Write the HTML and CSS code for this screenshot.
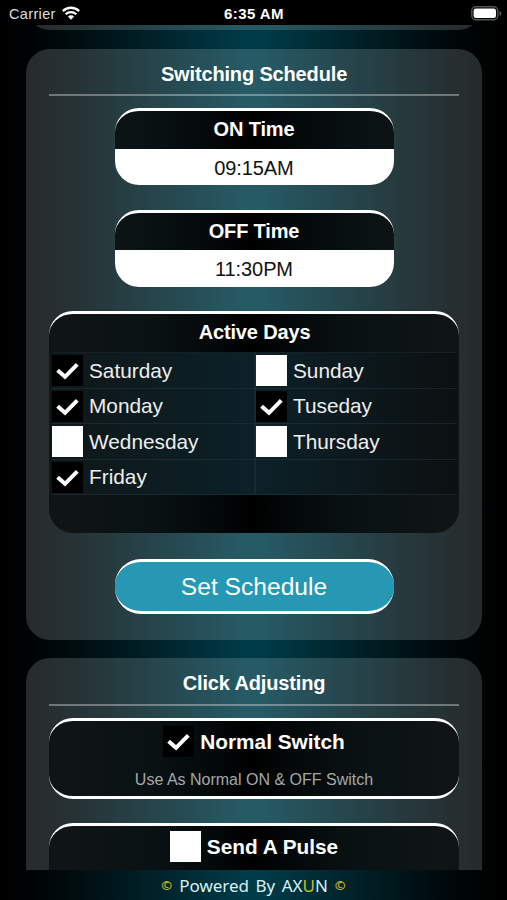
FILE: index.html
```html
<!DOCTYPE html>
<html lang="en">
<head>
<meta charset="utf-8">
<title>Switching Schedule</title>
<link rel="stylesheet" href="styles.css">
</head>
<body>
<header class="status">
  <div class="carrier"><span class="carrier-name">Carrier</span>
    <svg class="wifi" viewBox="0 0 18 14" width="18" height="14"><g fill="none" stroke="#fff" stroke-width="2.3"><path d="M.8 5.1a11.7 11.7 0 0 1 16.4 0"/><path d="M3.7 8.2a7.6 7.6 0 0 1 10.6 0"/></g><path d="M9 13.7 5.9 10.5a4.4 4.4 0 0 1 6.2 0z" fill="#fff"/></svg>
  </div>
  <span class="clock">6:35 AM</span>
  <svg class="battery" viewBox="0 0 31 15" width="31" height="15"><rect x=".8" y=".8" width="26" height="13" rx="4" fill="none" stroke="#555" stroke-width="1.4"/><rect x="2.6" y="2.6" width="22.4" height="9.4" rx="2.2" fill="#fff"/><path d="M28.6 5c2.2.8 2.2 4.2 0 5z" fill="#666"/></svg>
</header>
<main class="screen">
  <section class="card card-previous"></section>
  <section class="card card-schedule">
    <h2 class="title">Switching Schedule</h2>
    <div class="time"><h3 class="time-name">ON Time</h3><div class="time-value">09:15AM</div></div>
    <div class="time"><h3 class="time-name">OFF Time</h3><div class="time-value">11:30PM</div></div>
    <div class="panel days">
      <h3 class="days-title">Active Days</h3>
      <div class="grid">
        <div class="day"><span class="box on"><svg class="tick" viewBox="0 0 31 31"><path d="m5.6 15.2 7.4 6.6L25.3 9.3"/></svg></span>Saturday</div>
        <div class="day"><span class="box"></span>Sunday</div>
        <div class="day"><span class="box on"><svg class="tick" viewBox="0 0 31 31"><path d="m5.6 15.2 7.4 6.6L25.3 9.3"/></svg></span>Monday</div>
        <div class="day"><span class="box on"><svg class="tick" viewBox="0 0 31 31"><path d="m5.6 15.2 7.4 6.6L25.3 9.3"/></svg></span>Tuseday</div>
        <div class="day"><span class="box"></span>Wednesday</div>
        <div class="day"><span class="box"></span>Thursday</div>
        <div class="day"><span class="box on"><svg class="tick" viewBox="0 0 31 31"><path d="m5.6 15.2 7.4 6.6L25.3 9.3"/></svg></span>Friday</div>
        <div class="day"></div>
      </div>
    </div>
    <button class="submit">Set Schedule</button>
  </section>
  <section class="card card-click">
    <h2 class="title">Click Adjusting</h2>
    <div class="panel mode">
      <div class="mode-name"><span class="box on"><svg class="tick" viewBox="0 0 31 31"><path d="m5.6 15.2 7.4 6.6L25.3 9.3"/></svg></span>Normal Switch</div>
      <p class="mode-note">Use As Normal ON &amp; OFF Switch</p>
    </div>
    <div class="panel mode">
      <div class="mode-name"><span class="box"></span>Send A Pulse</div>
    </div>
  </section>
</main>
<footer class="footer"><span class="gold mark">©</span><span class="powered">Powered By AX<span class="gold">U</span>N</span><span class="gold mark">©</span></footer>
</body>
</html>
```
FILE: styles.css
```css
* { box-sizing: border-box; }
body {
  margin: 0;
  height: 900px;
  display: flex;
  flex-direction: column;
  overflow: hidden;
  color: #fff;
  font-family: "Liberation Sans", Arial, sans-serif;
  background: linear-gradient(90deg, #000 0, #000203 5%, #00090b 12%, #001a20 25%, #003b48 48%, #003b48 52%, #001a20 75%, #00090b 88%, #000203 95%, #000 100%);
}
h2, h3, p { margin: 0; }
.status {
  height: 25px;
  flex: none;
  background: #000;
  display: grid;
  grid-template-columns: 1fr auto 1fr;
  align-items: center;
  padding: 2px 5px 0 9px;
  font-size: 14.5px;
}
.carrier { display: flex; align-items: center; gap: 6px; color: #ddd; letter-spacing: .35px; }
.wifi { margin-top: -2px; }
.clock { font-weight: bold; font-size: 15px; letter-spacing: .4px; margin-left: -3px; }
.battery { justify-self: end; margin-right: 0; }
.screen {
  flex: none;
  height: 845px;
  overflow: hidden;
  padding: 0 25px 0 26px;
}
.card {
  background: rgba(232, 246, 250, .165);
  border-radius: 24px;
  padding: 0 23px;
}
.card-previous { height: 50px; margin: -45px 0 18.5px; }
.card-schedule { height: 591px; display: flow-root; }
.card-click { height: 300px; margin-top: 18.5px; display: flow-root; }
.title {
  height: 47.5px;
  line-height: 50px;
  text-align: center;
  font-size: 20px;
  letter-spacing: -.15px;
  border-bottom: 2px solid rgba(255, 255, 255, .34);
}
.time {
  width: 279px;
  height: 77px;
  margin: 12px auto 24.5px;
  border-radius: 24px;
  border-top: 3px solid #fff;
  overflow: hidden;
  text-align: center;
  background: linear-gradient(90deg, rgba(0, 0, 0, .67), #000 50%, rgba(0, 0, 0, .67));
}
.time + .time { margin-top: 0; }
.time-name { height: 37.5px; line-height: 37px; font-size: 20px; letter-spacing: -.15px; }
.time-value { height: 37px; line-height: 38px; font-size: 20px; letter-spacing: -.1px; color: #111; background: #fff; }
.panel {
  background: linear-gradient(90deg, rgba(0, 0, 0, .57), rgba(0, 0, 0, .75) 25%, #000 50%, rgba(0, 0, 0, .75) 75%, rgba(0, 0, 0, .57));
  border-radius: 24px;
  border-top: 3px solid #fff;
}
.days { height: 222px; padding: 0 2px 0 3px; }
.days-title { height: 38px; line-height: 37px; font-size: 20px; letter-spacing: -.15px; text-align: center; }
.grid {
  display: grid;
  grid-template-columns: 202px 1fr;
  grid-template-rows: repeat(4, 35.5px);
  background: linear-gradient(90deg, #0f1718, #0b2027 46%, #0c2027 54%, #0c1011);
  border-top: 1px solid #132124;
}
.day {
  display: flex;
  align-items: center;
  gap: 6px;
  padding-top: 1px;
  font-size: 20.8px;
  color: #eee;
  border-bottom: 1px solid rgba(35, 52, 56, .6);
}
.day:nth-child(even) { border-left: 2px solid rgba(35, 60, 66, .4); }
.box { width: 31px; height: 31px; flex: none; background: #fff; }
.box.on { background: #000; }
.tick { display: block; width: 31px; height: 31px; fill: none; stroke: #fff; stroke-width: 4; }
.submit {
  display: block;
  width: 279px;
  height: 55px;
  margin: 26px auto 0;
  padding: 1px 0 0;
  border: 0 solid #fff;
  border-width: 3px 0;
  border-radius: 26px;
  background: #2698b3;
  color: #fff;
  font: 24.6px "Liberation Sans", Arial, sans-serif;
}
.mode { height: 81px; margin: 12px 0 24px; border-bottom: 3px solid #fff; text-align: center; }
.mode-name {
  display: flex;
  align-items: center;
  justify-content: center;
  gap: 6px;
  height: 42px;
  font-size: 20.8px;
  font-weight: bold;
}
.mode-note { font-size: 16px; line-height: 34px; color: #a5a8a9; }
.footer {
  height: 30px;
  display: flex;
  align-items: center;
  justify-content: center;
  gap: 7px;
  font-family: "Noto Sans", sans-serif;
  font-size: 17px;
  color: #d9f1f5;
}
.powered { word-spacing: 2px; }
.gold { color: #c9bd20; }
.mark { font-size: 13px; font-weight: bold; }
```
